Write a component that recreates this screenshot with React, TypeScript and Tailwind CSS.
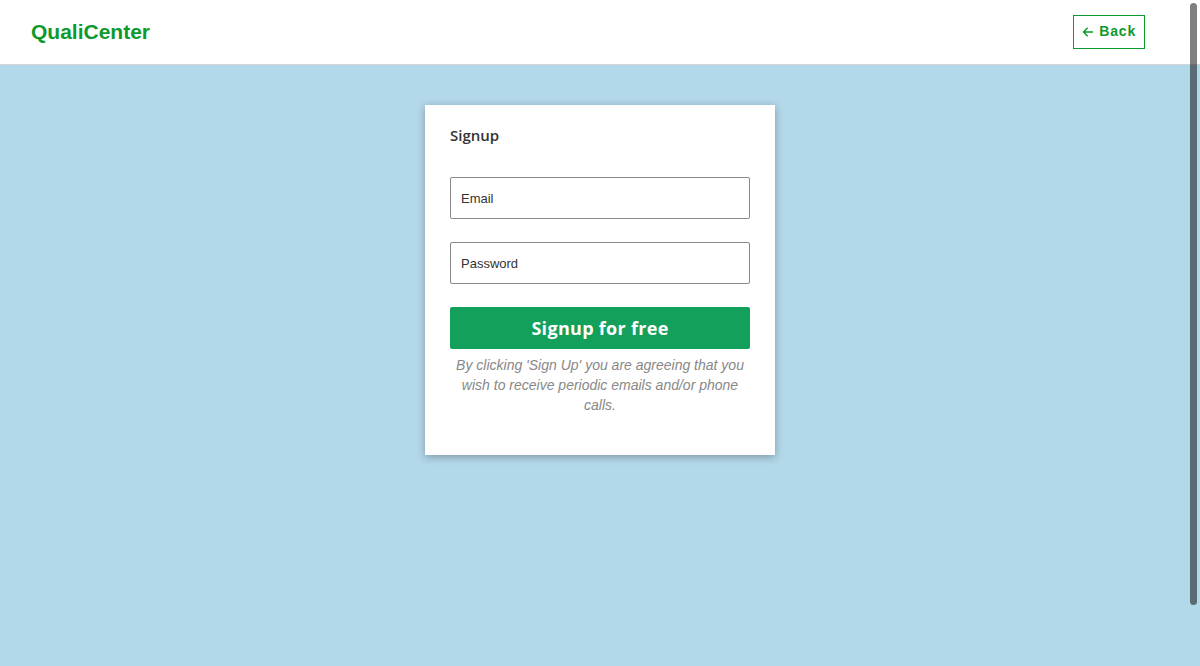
export default function App() {
  return (
    <div className="relative min-h-[666px] h-[666px] overflow-hidden bg-[#b3d8e9] font-['Liberation_Sans',Arial,sans-serif]">
      {/* header */}
      <header className="h-[65px] bg-white border-b border-[#d6d6d6] flex items-center justify-between pl-[31px] pr-[55px]">
        <div className="text-[21px] font-bold text-[#0c9a2c] mt-[-1px]">QualiCenter</div>
        <button className="h-[34px] pl-[8px] pr-[8px] border border-[#0c9a2c] text-[#0c9a2c] flex items-center gap-[5px] text-[14px] font-bold tracking-[0.8px] mt-[-1px]">
          <svg width="12" height="12" viewBox="0 0 448 512" fill="currentColor">
            <path d="M9.4 233.4c-12.5 12.5-12.5 32.8 0 45.3l160 160c12.5 12.5 32.8 12.5 45.3 0s12.5-32.8 0-45.3L109.2 288H416c17.7 0 32-14.3 32-32s-14.3-32-32-32H109.3L214.6 118.6c12.5-12.5 12.5-32.8 0-45.3s-32.8-12.5-45.3 0l-160 160z" />
          </svg>
          Back
        </button>
      </header>

      {/* card */}
      <div className="flex justify-center pt-[40px]">
        <div className="w-[350px] h-[350px] bg-white shadow-[0_2px_8px_rgba(0,0,0,0.3)] px-[25px] pt-[19px]">
          <h2 className="text-[15px] font-semibold text-[#333] font-['Open_Sans',sans-serif] leading-[22px]">Signup</h2>
          <form className="mt-[31px] flex flex-col">
            <input
              placeholder="Email"
              className="h-[42px] border border-[#8a8a8a] rounded-[2px] px-[10px] text-[13px] placeholder:text-[#333] text-[#333] outline-none"
            />
            <input
              type="password"
              placeholder="Password"
              className="mt-[23px] h-[42px] border border-[#8a8a8a] rounded-[2px] px-[10px] text-[13px] placeholder:text-[#333] text-[#333] outline-none"
            />
            <button
              type="button"
              className="mt-[23px] h-[42px] bg-[#13a05b] rounded-[2px] text-white text-[18px] font-bold font-['Open_Sans',sans-serif] tracking-[0.3px]"
            >
              Signup for free
            </button>
          </form>
          <p className="mt-[6px] text-center text-[14px] italic text-[#888] leading-[20px] px-[4px]">
            By clicking 'Sign Up' you are agreeing that you wish to receive periodic emails and/or phone calls.
          </p>
        </div>
      </div>

      {/* overlay scrollbar */}
      <div className="absolute right-[3px] top-[3px] w-[7px] h-[602px] rounded-full bg-black/50" />
    </div>
  );
}
